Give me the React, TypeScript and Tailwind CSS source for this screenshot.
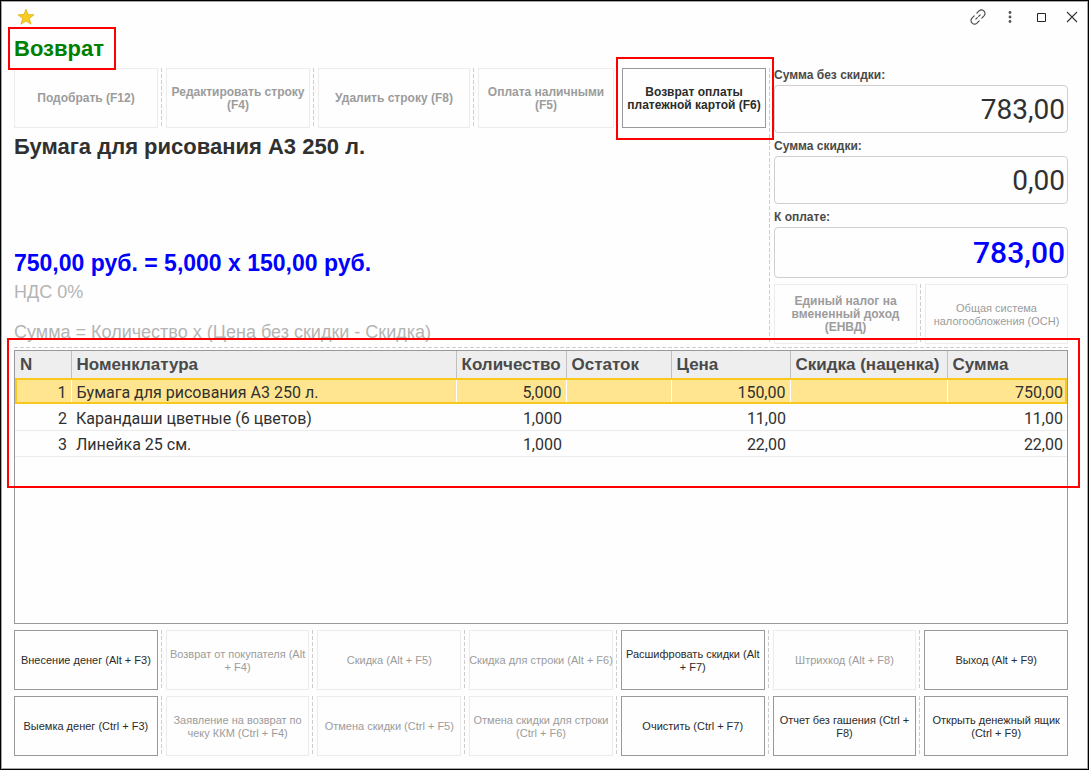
import { Fragment } from "react";

interface Action {
  label: string;
  disabled?: boolean;
  bold?: boolean;
  marked?: boolean;
  oneLine?: boolean;
  grow?: string;
}

interface Line {
  name: string;
  quantity: string;
  price: string;
  total: string;
}

const topActions: Action[] = [
  { label: "Подобрать (F12)", disabled: true, bold: true, grow: "flex-[144]" },
  { label: "Редактировать строку (F4)", disabled: true, bold: true, grow: "flex-[144]" },
  { label: "Удалить строку (F8)", disabled: true, bold: true, grow: "flex-[152]" },
  { label: "Оплата наличными (F5)", disabled: true, bold: true, grow: "flex-[136]" },
  { label: "Возврат оплаты платежной картой (F6)", bold: true, marked: true, grow: "flex-[144]" },
];

const taxActions: Action[] = [
  { label: "Единый налог на вмененный доход (ЕНВД)", disabled: true, bold: true },
  { label: "Общая система налогообложения (ОСН)", disabled: true },
];

const bottomActions: Action[][] = [
  [
    { label: "Внесение денег (Alt + F3)" },
    { label: "Возврат от покупателя (Alt + F4)", disabled: true },
    { label: "Скидка (Alt + F5)", disabled: true },
    { label: "Скидка для строки (Alt + F6)", disabled: true, oneLine: true },
    { label: "Расшифровать скидки (Alt + F7)" },
    { label: "Штрихкод (Alt + F8)", disabled: true },
    { label: "Выход (Alt + F9)" },
  ],
  [
    { label: "Выемка денег (Ctrl + F3)" },
    { label: "Заявление на возврат по чеку ККМ (Ctrl + F4)", disabled: true },
    { label: "Отмена скидки (Ctrl + F5)", disabled: true },
    { label: "Отмена скидки для строки (Ctrl + F6)", disabled: true },
    { label: "Очистить (Ctrl + F7)" },
    { label: "Отчет без гашения (Ctrl + F8)" },
    { label: "Открыть денежный ящик (Ctrl + F9)" },
  ],
];

const lines: Line[] = [
  { name: "Бумага для рисования А3 250 л.", quantity: "5,000", price: "150,00", total: "750,00" },
  { name: "Карандаши цветные (6 цветов)", quantity: "1,000", price: "11,00", total: "11,00" },
  { name: "Линейка 25 см.", quantity: "1,000", price: "22,00", total: "22,00" },
];

const columns = [
  { title: "N", width: "w-[56px]" },
  { title: "Номенклатура", width: "" },
  { title: "Количество", width: "w-[110px]" },
  { title: "Остаток", width: "w-[105px]" },
  { title: "Цена", width: "w-[119px]" },
  { title: "Скидка (наценка)", width: "w-[157px]" },
  { title: "Сумма", width: "w-[120px]" },
];

const Divider = () => (
  <div className="ml-[3px] mr-1 w-px shrink-0 bg-[repeating-linear-gradient(to_bottom,#cdcdcd_0px,#cdcdcd_4px,transparent_4px,transparent_6px)]" />
);

const ActionButton = ({ label, disabled, bold, marked, oneLine, grow = "flex-1" }: Action) => (
  <div className={`relative flex min-w-0 ${grow}`}>
    <button
      type="button"
      disabled={disabled}
      className={`h-[60px] w-full border pt-px text-center font-['Liberation_Sans',sans-serif] leading-[13px] ${
        bold ? "px-0.5 text-[12px] font-bold" : "text-[11px]"
      } ${disabled ? "border-[#ececec] text-[#9c9c9c]" : "border-[#999] text-[#2b2b2b]"}`}
    >
      <span className={oneLine ? "-mx-2 whitespace-nowrap" : ""}>{label}</span>
    </button>
    {marked && (
      <div className="pointer-events-none absolute -top-[11px] -right-2 -bottom-3 -left-1.5 z-10 border-2 border-[#f00]" />
    )}
  </div>
);

const ActionRow = ({ actions }: { actions: Action[] }) => (
  <div className="flex">
    {actions.map((action, i) => (
      <Fragment key={action.label}>
        {i > 0 && <Divider />}
        <ActionButton {...action} />
      </Fragment>
    ))}
  </div>
);

const SumField = ({ id, label, value, accent }: { id: string; label: string; value: string; accent?: boolean }) => (
  <div className="mb-1.5">
    <label
      htmlFor={id}
      className="mb-[3px] block font-['Liberation_Sans',sans-serif] text-[12px] leading-[14px] font-bold text-[#4a4a4a]"
    >
      {label}
    </label>
    <input
      id={id}
      readOnly
      value={value}
      className={`block w-full rounded border border-[#cfcfcf] bg-transparent pr-0.5 text-right outline-none ${
        accent ? "h-[51px] text-[30px] font-medium text-[#00f]" : "h-12 text-[28px] text-[#303030]"
      }`}
    />
  </div>
);

const TitleBar = () => (
  <div className="flex h-[30px] items-center justify-between pr-[7px] pl-[15px]">
    <button type="button" aria-label="В избранное">
      <svg width="18" height="18" viewBox="0 0 18 18">
        <path
          d="M9 1.2l2.1 5.3 5.9.3-4.6 3.7 1.6 5.7L9 13l-5 3.2 1.6-5.7L1 6.8l5.9-.3z"
          fill="#f8cc20"
          stroke="#d9ac10"
          strokeWidth="0.7"
        />
      </svg>
    </button>
    <div className="flex items-center text-[#444]">
      <button type="button" aria-label="Ссылка" className="mr-4">
        <svg width="16" height="16" viewBox="0 0 16 16" fill="none" stroke="currentColor" strokeWidth="1.1" strokeLinecap="round">
          <path d="M5.8 10.2l1.6-1.6M8.6 7.4l1.6-1.6" />
          <path d="M6.8 4.2l2.5-2.5a3.2 3.2 0 0 1 4.6 .3a3.2 3.2 0 0 1 .3 4.6L11.8 9.1" />
          <path d="M9.2 11.8l-2.5 2.5a3.2 3.2 0 0 1-4.6-.3a3.2 3.2 0 0 1-.3-4.6L4.2 6.9" />
        </svg>
      </button>
      <button type="button" aria-label="Меню" className="mr-4">
        <svg width="16" height="16" viewBox="0 0 16 16" fill="#555">
          <circle cx="8" cy="3.5" r="1.4" />
          <circle cx="8" cy="8" r="1.4" />
          <circle cx="8" cy="12.5" r="1.4" />
        </svg>
      </button>
      <button type="button" aria-label="Развернуть" className="mr-3.5">
        <svg width="16" height="16" viewBox="0 0 16 16" fill="none" stroke="#222">
          <path d="M3.5 4.5h8v8h-8z" />
        </svg>
      </button>
      <button type="button" aria-label="Закрыть">
        <svg width="16" height="16" viewBox="0 0 16 16" stroke="#333" strokeWidth="1.1">
          <path d="M3 3l10 10M13 3L3 13" />
        </svg>
      </button>
    </div>
  </div>
);

const LinesTable = () => (
  <table className="w-full table-fixed border-collapse text-[16px] text-[#303030]">
    <thead>
      <tr className="h-[27px] border-b border-[#c0c0c0] bg-[#eee]">
        {columns.map((column) => (
          <th
            key={column.title}
            className={`border-r border-[#c0c0c0] pt-0.5 pr-0 pb-0 pl-[5px] text-left font-['Liberation_Sans',sans-serif] text-[17px] leading-5 font-bold whitespace-nowrap text-[#4a4a4a] last:border-r-0 ${column.width}`}
          >
            {column.title}
          </th>
        ))}
      </tr>
    </thead>
    <tbody className="[&_td]:pt-1 [&_td]:pr-1 [&_td]:pb-0 [&_td]:pl-[5px] [&_td]:leading-5">
      {lines.map((line, i) => (
        <tr
          key={line.name}
          className={
            i === 0
              ? "h-[26px] bg-[#ffe58f] outline-2 -outline-offset-2 outline-[#f9c81e] [&_td]:border-r [&_td]:border-white [&_td:last-child]:border-r-0"
              : "h-[26px] border-b border-[#ececec]"
          }
        >
          <td className="text-right">{i + 1}</td>
          <td className="whitespace-nowrap">{line.name}</td>
          <td className="text-right">{line.quantity}</td>
          <td />
          <td className="text-right">{line.price}</td>
          <td />
          <td className="text-right">{line.total}</td>
        </tr>
      ))}
    </tbody>
  </table>
);

export default function App() {
  return (
    <div className="flex min-h-screen flex-col border border-black bg-[#fefefe] font-[Roboto,sans-serif]">
      <div className="flex flex-1 flex-col border border-[#a8a8a8]">
        <TitleBar />

        <div className="flex flex-1 flex-col pr-[19px] pb-3 pl-3">
          <div className="relative flex h-9 items-center self-start pr-3 pb-0.5">
            <h1 className="font-['Liberation_Sans',sans-serif] text-[22px] leading-6 font-bold text-[#008000]">Возврат</h1>
            <div className="pointer-events-none absolute -top-[5px] right-0 -bottom-0.5 -left-1.5 z-10 border-2 border-[#f00]" />
          </div>

          <div className="flex">
            {/* Current line */}
            <div className="flex min-w-0 flex-[752] flex-col font-['Liberation_Sans',sans-serif]">
              <ActionRow actions={topActions} />
              <h2 className="pt-[7px] text-[22px] leading-6 font-bold text-[#303030]">Бумага для рисования А3 250 л.</h2>
              <div className="mt-auto text-[23px] leading-6 font-bold text-[#00f]">750,00 руб. = 5,000 x 150,00 руб.</div>
              <div className="mt-[7px] text-[18px] leading-5 text-[#b4b4b4]">НДС 0%</div>
              <div className="mt-5 mb-0.5 text-[18px] leading-5 text-[#b4b4b4]">
                Сумма = Количество x (Цена без скидки - Скидка)
              </div>
            </div>

            <Divider />

            {/* Totals */}
            <div className="min-w-0 flex-[294]">
              <SumField id="sum" label="Сумма без скидки:" value="783,00" />
              <SumField id="discount" label="Сумма скидки:" value="0,00" />
              <SumField id="total" label="К оплате:" value="783,00" accent />
              <ActionRow actions={taxActions} />
            </div>
          </div>

          <div className="mt-[3px] mb-0.5 h-px bg-[repeating-linear-gradient(to_right,#cdcdcd_0px,#cdcdcd_4px,transparent_4px,transparent_6px)]" />

          <div className="relative flex-1 border border-[#999]">
            <LinesTable />
            <div className="pointer-events-none absolute -top-[13px] -right-[13px] -left-2 z-10 h-[150px] border-2 border-[#f00]" />
          </div>

          <div className="mt-1.5 flex flex-col gap-1.5">
            {bottomActions.map((actions, i) => (
              <ActionRow key={i} actions={actions} />
            ))}
          </div>
        </div>
      </div>
    </div>
  );
}
